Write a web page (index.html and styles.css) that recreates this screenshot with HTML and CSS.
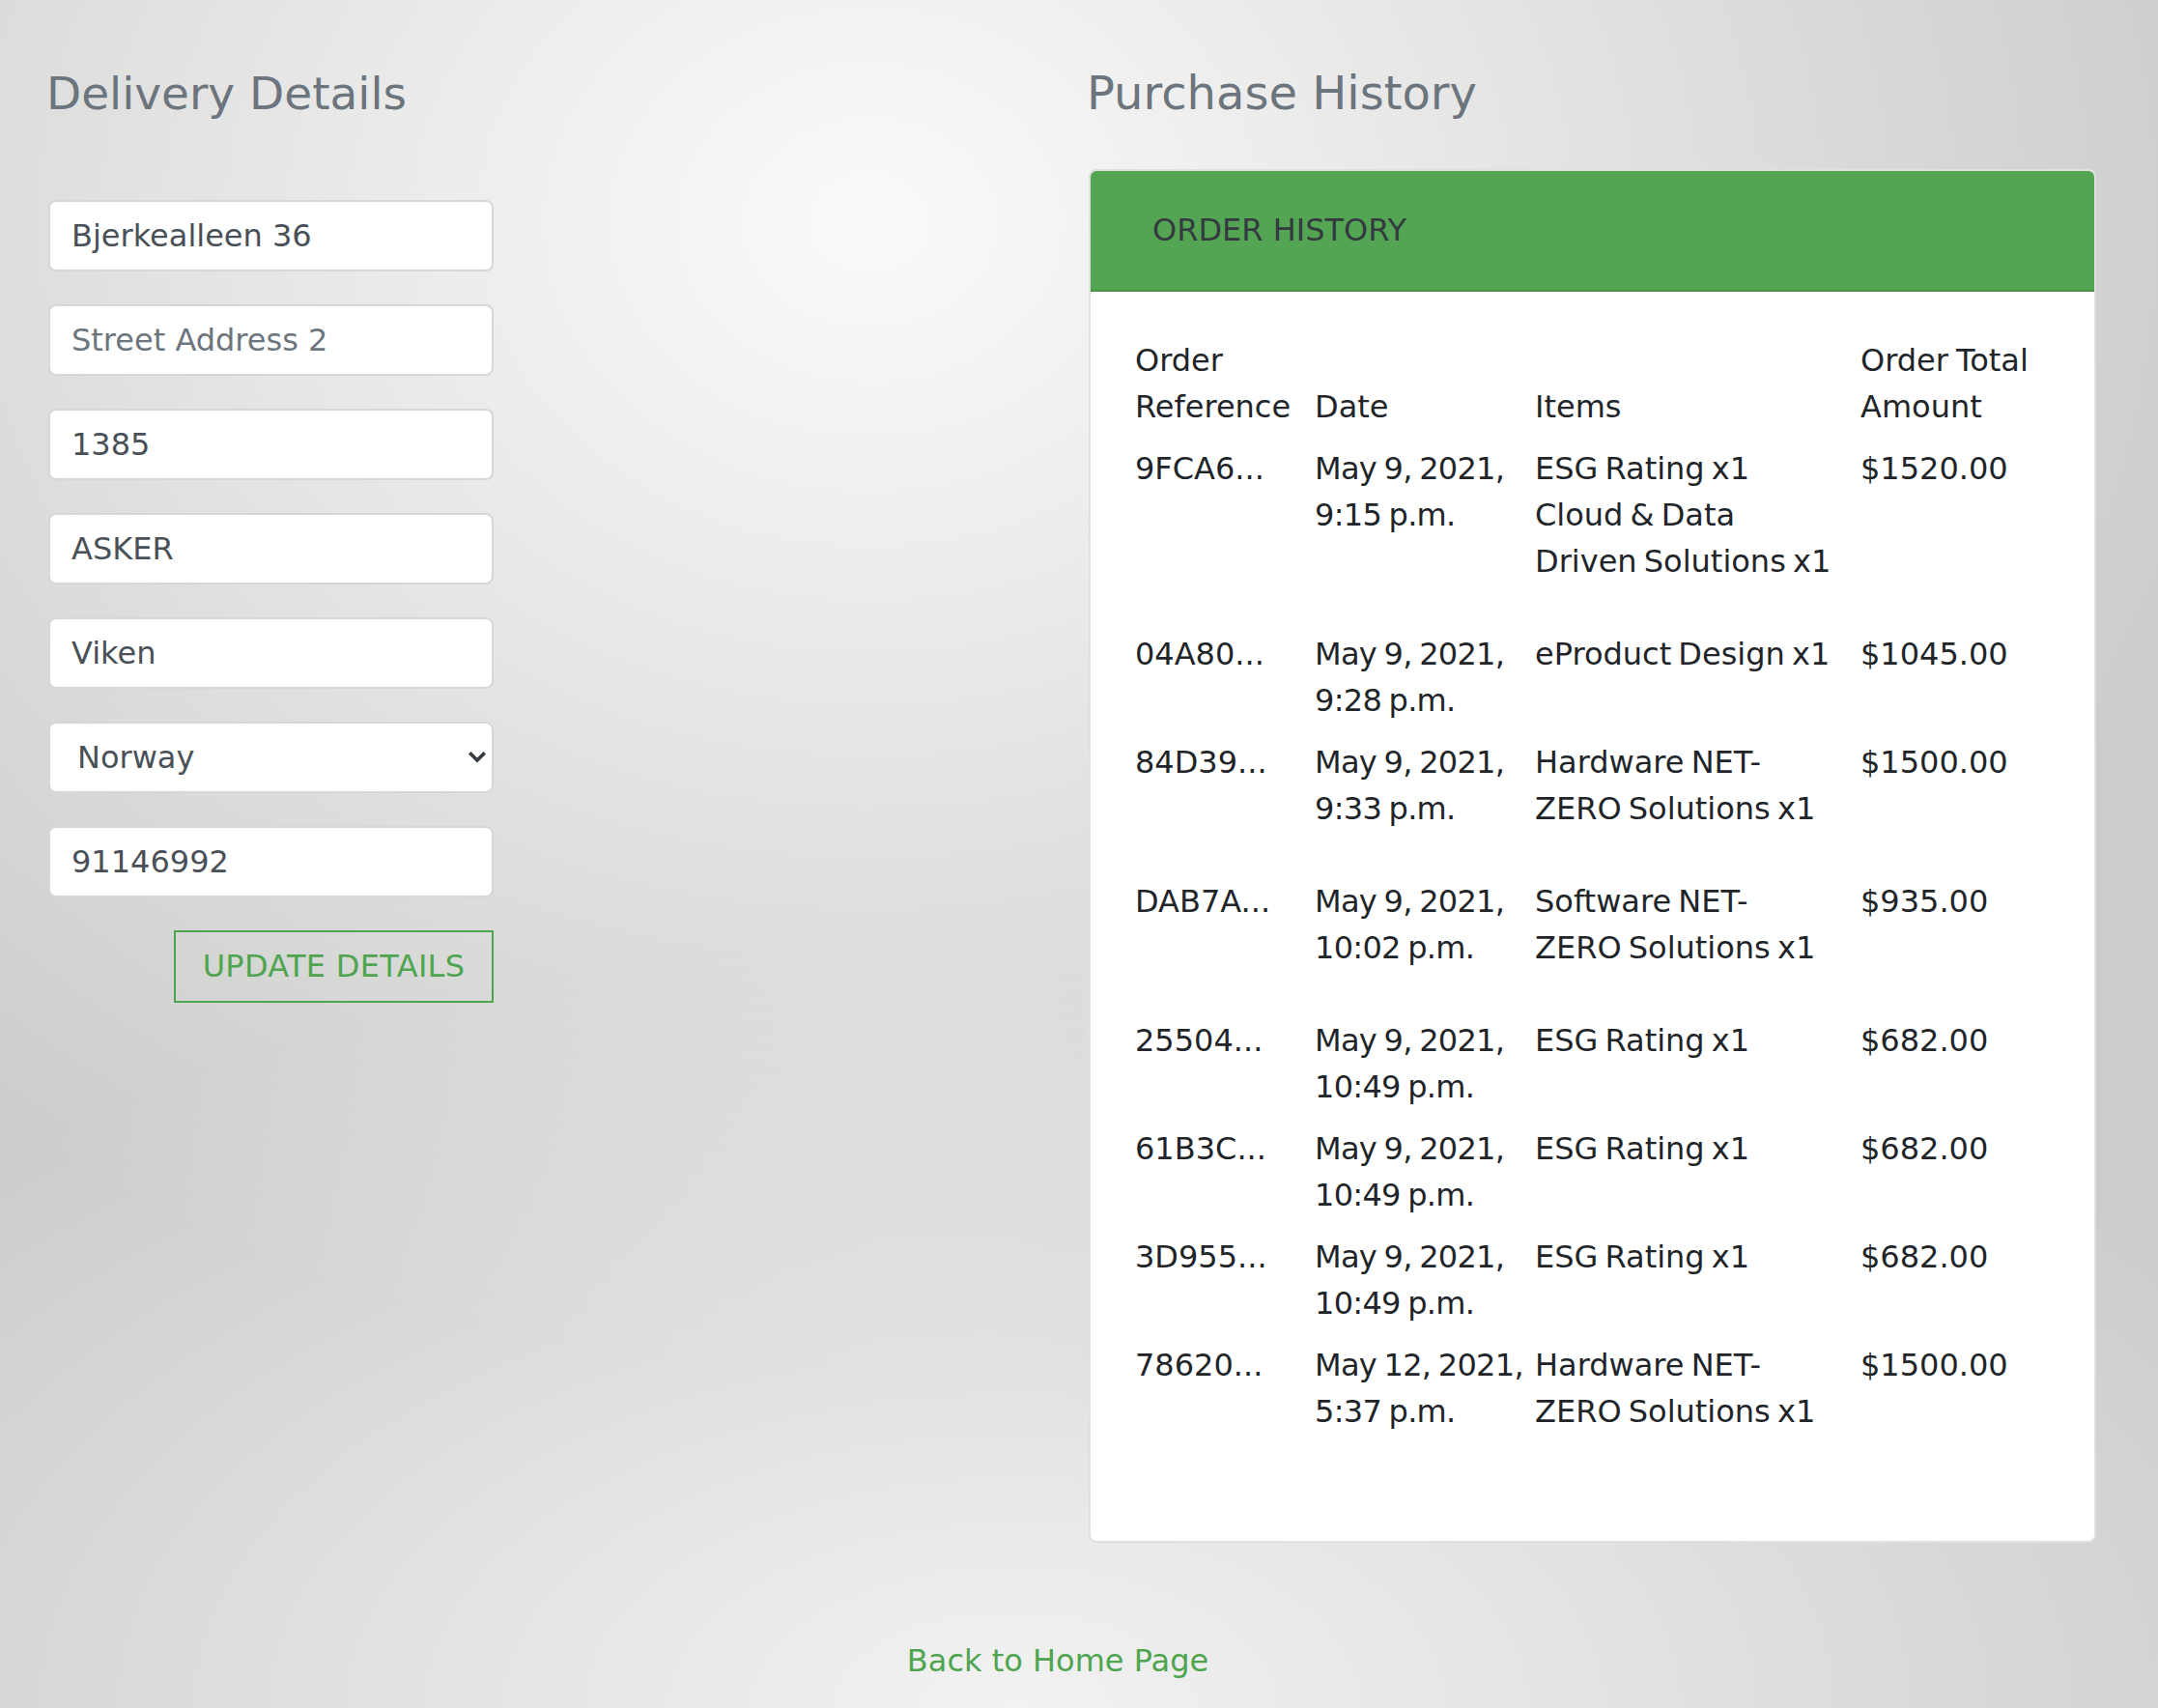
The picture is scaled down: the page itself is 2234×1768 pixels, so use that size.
FILE: index.html
```html
<!DOCTYPE html>
<html lang="en">
<head>
<meta charset="utf-8">
<title>Profile</title>
<link rel="stylesheet" href="styles.css">
</head>
<body>
<div class="page">
  <main class="columns">
    <section class="delivery">
      <h2 class="title">Delivery Details</h2>
      <form class="address-form">
        <input class="field" type="text" value="Bjerkealleen 36">
        <input class="field" type="text" placeholder="Street Address 2">
        <input class="field" type="text" value="1385">
        <input class="field" type="text" value="ASKER">
        <input class="field" type="text" value="Viken">
        <div class="select-wrap">
          <select class="field select"><option>Norway</option></select>
          <svg class="chevron" viewBox="0 0 18 12" aria-hidden="true"><path d="M2.5 2.5 L9 9 L15.5 2.5" fill="none" stroke="#343a40" stroke-width="3.6" stroke-linecap="square"/></svg>
        </div>
        <input class="field" type="text" value="91146992">
        <div class="actions"><button type="button" class="btn-outline">Update Details</button></div>
      </form>
    </section>
    <section class="history">
      <h2 class="title title-right">Purchase History</h2>
      <div class="card">
        <div class="card-header">ORDER HISTORY</div>
        <div class="card-body">
          <table class="orders">
            <colgroup>
              <col class="c-ref"><col class="c-date"><col class="c-items"><col class="c-total">
            </colgroup>
            <thead>
              <tr><th>Order Reference</th><th>Date</th><th>Items</th><th>Order Total Amount</th></tr>
            </thead>
            <tbody>
              <tr><td>9FCA6...</td><td class="date"><span>May 9, 2021,</span> <span>9:15 p.m.</span></td><td class="items-cell"><p class="items">ESG Rating x1<br>Cloud &amp; Data Driven Solutions x1</p></td><td>$1520.00</td></tr>
              <tr><td>04A80...</td><td class="date"><span>May 9, 2021,</span> <span>9:28 p.m.</span></td><td class="items-cell"><p class="items">eProduct Design x1</p></td><td>$1045.00</td></tr>
              <tr><td>84D39...</td><td class="date"><span>May 9, 2021,</span> <span>9:33 p.m.</span></td><td class="items-cell"><p class="items">Hardware NET-ZERO Solutions x1</p></td><td>$1500.00</td></tr>
              <tr><td>DAB7A...</td><td class="date"><span>May 9, 2021,</span> <span>10:02 p.m.</span></td><td class="items-cell"><p class="items">Software NET-ZERO Solutions x1</p></td><td>$935.00</td></tr>
              <tr><td>25504...</td><td class="date"><span>May 9, 2021,</span> <span>10:49 p.m.</span></td><td class="items-cell"><p class="items">ESG Rating x1</p></td><td>$682.00</td></tr>
              <tr><td>61B3C...</td><td class="date"><span>May 9, 2021,</span> <span>10:49 p.m.</span></td><td class="items-cell"><p class="items">ESG Rating x1</p></td><td>$682.00</td></tr>
              <tr><td>3D955...</td><td class="date"><span>May 9, 2021,</span> <span>10:49 p.m.</span></td><td class="items-cell"><p class="items">ESG Rating x1</p></td><td>$682.00</td></tr>
              <tr><td>78620...</td><td class="date"><span>May 12, 2021,</span> <span>5:37 p.m.</span></td><td class="items-cell"><p class="items">Hardware NET-ZERO Solutions x1</p></td><td>$1500.00</td></tr>
            </tbody>
          </table>
        </div>
      </div>
    </section>
  </main>
  <footer class="footer"><a class="home-link" href="#">Back to Home Page</a></footer>
</div>
</body>
</html>
```
FILE: styles.css
```css
html, body {
  margin: 0;
  padding: 0;
}

body {
  min-height: 1768px;
  font-family: "DejaVu Sans", "Liberation Sans", sans-serif;
  color: #212529;
  background:
    radial-gradient(ellipse 1450px 1200px at 900px 230px, rgba(250,250,250,1) 0%, rgba(250,250,250,0.6) 40%, rgba(250,250,250,0) 100%),
    radial-gradient(ellipse 1500px 800px at 1050px 1768px, rgba(242,242,242,1) 0%, rgba(242,242,242,0.5) 50%, rgba(242,242,242,0) 100%),
    #cbcdca;
}

.page {
  padding-top: 68px;
}

.columns {
  display: grid;
  grid-template-columns: 1079px 1043px;
  padding-left: 48px;
  align-items: start;
}

.title {
  margin: 0;
  font-size: 48px;
  font-weight: 400;
  line-height: 57.6px;
  color: #6c757d;
}

.delivery .title {
  margin-bottom: 81px;
  font-size: 47px;
}

.title-right {
  margin-left: -2px;
  margin-bottom: 49px;
}

.address-form {
  display: flex;
  flex-direction: column;
  gap: 34px;
  width: 461px;
  margin: 0 0 0 2px;
}

.field {
  box-sizing: border-box;
  display: block;
  width: 461px;
  height: 74px;
  margin: 0;
  padding: 0 22px;
  border: 2px solid #d4d8dc;
  border-radius: 8px;
  background: #fff;
  font-family: "DejaVu Sans", "Liberation Sans", sans-serif;
  font-size: 32px;
  color: #495057;
  outline: none;
}

.field::placeholder {
  color: #6c757d;
  opacity: 1;
}

.select-wrap {
  position: relative;
}

.select {
  appearance: none;
  -webkit-appearance: none;
  padding-left: 28px;
}

.chevron {
  position: absolute;
  right: 8px;
  top: 31px;
  width: 18px;
  height: 12px;
  pointer-events: none;
}

.actions {
  display: flex;
  justify-content: flex-end;
}

.btn-outline {
  box-sizing: border-box;
  width: 331px;
  height: 75px;
  padding: 0;
  border: 2px solid #4fa54f;
  border-radius: 0;
  background: transparent;
  color: #4fa54f;
  font-family: "DejaVu Sans", "Liberation Sans", sans-serif;
  font-size: 32px;
  letter-spacing: 0.3px;
  text-transform: uppercase;
}

.card {
  box-sizing: border-box;
  width: 1043px;
  border: 2px solid #e0e0e0;
  border-radius: 8px;
  background: #fff;
  overflow: hidden;
}

.card-header {
  padding: 37px 60px 38px 64px;
  background: #53a553;
  border-bottom: 2px solid #4a944a;
  color: #343a40;
  font-size: 32px;
  line-height: 48px;
}

.card-body {
  padding: 39px 24px 38px 38px;
}

.orders {
  border-collapse: collapse;
  table-layout: fixed;
  width: 977px;
  margin: 0 0 32px;
  font-size: 32px;
  line-height: 48px;
  color: #212529;
  word-spacing: -2px;
}

.c-ref { width: 186px; }
.c-date { width: 228px; }
.c-items { width: 337px; }
.c-total { width: 226px; }

.orders th,
.orders td {
  padding: 8px;
  text-align: left;
  vertical-align: top;
  font-weight: 400;
}

.orders th {
  vertical-align: bottom;
}

.date {
  letter-spacing: -0.7px;
}

.date span {
  white-space: nowrap;
}

.orders .items-cell {
  padding-right: 19px;
  word-spacing: -3px;
}

.items {
  margin: 0 0 32px;
}

.footer {
  margin-top: 98px;
  padding-right: 44px;
  text-align: center;
  font-size: 32px;
  line-height: 48px;
}

.home-link {
  color: #4fa54f;
  text-decoration: none;
}
```
